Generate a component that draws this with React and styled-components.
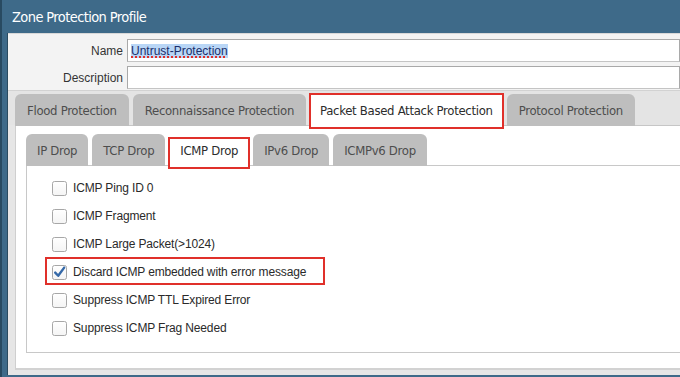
import React from 'react';
import styled, { createGlobalStyle } from 'styled-components';

const NARROW = `"DejaVu Sans Condensed", "Roboto Condensed", "Liberation Sans", sans-serif`;
const UI = `"Liberation Sans", Arial, sans-serif`;

const GlobalStyle = createGlobalStyle`
  html, body {
    margin: 0;
    padding: 0;
  }
  body {
    background: #3e6a89;
    overflow: hidden;
  }
`;

const Dialog = styled.div`
  width: 680px;
  height: 377px;
  box-sizing: border-box;
  display: flex;
  flex-direction: column;
  background: #3e6a89;
  border-left: 2px solid #284a61;
`;

const TitleBar = styled.div`
  height: 33px;
  flex-shrink: 0;
  display: flex;
  align-items: center;
  padding-left: 10px;
  color: #ffffff;
  font-family: ${NARROW};
  font-size: 14.5px;
  letter-spacing: -0.6px;
`;

const Body = styled.div`
  flex: 1;
  min-height: 0;
  margin: 0 0 2px 5px;
  border-left: 1px solid #2a4b60;
  background: #e6e6e6;
  display: flex;
  flex-direction: column;
  padding-bottom: 5px;
`;

const Form = styled.div`
  background: #f3f3f3;
  border-top: 1px solid #d8d8d8;
  padding: 5px 0 1px 0;
  display: flex;
  flex-direction: column;
  gap: 4px;
`;

const FieldRow = styled.div`
  display: grid;
  grid-template-columns: 115px 1fr;
  column-gap: 4px;
  align-items: center;
`;

const Label = styled.label`
  text-align: right;
  font-family: ${UI};
  font-size: 12px;
  color: #333;
`;

const Input = styled.div`
  height: 21px;
  background: #fff;
  border: 1px solid #a9a9a9;
  border-bottom-color: #c4c4c4;
  display: flex;
  align-items: center;
  padding-left: 3px;
  font-family: ${UI};
  font-size: 12px;
  color: #1b2f6b;
`;

const Selected = styled.span`
  background: #b9d6f6;
  text-decoration: underline dotted #e0302a;
  text-decoration-thickness: 2px;
  text-underline-offset: 2px;
`;

const TabStrip = styled.div`
  display: flex;
  gap: 4px;
  padding: ${(p) => (p.inner ? '0' : '3px 0 0 7px')};
  background: ${(p) => (p.inner ? 'transparent' : '#e4e4e4')};
  border-top: ${(p) => (p.inner ? 'none' : '1px solid #d2d2d2')};
  position: relative;
  z-index: 1;
`;

const Tab = styled.div`
  position: relative;
  height: 32px;
  box-sizing: border-box;
  display: flex;
  align-items: center;
  padding: 0 ${(p) => (p.inner ? 11 : p.active ? 10 : 12)}px;
  border-radius: 6px 6px 0 0;
  background: ${(p) => (p.active ? '#ffffff' : '#bebebe')};
  color: ${(p) => (p.active ? '#2c2c2c' : '#4d4d4d')};
  font-family: ${NARROW};
  font-size: 13px;
  letter-spacing: -0.3px;
  white-space: nowrap;
  margin-bottom: -1px;

  ${(p) =>
    p.active &&
    `
    border-radius: 0;
    &::after {
      content: '';
      position: absolute;
      left: -1px;
      right: -1px;
      top: ${p.inner ? 3 : -1}px;
      bottom: -3px;
      border: 2px solid #e0302a;
      pointer-events: none;
    }
  `}
`;

const Panel = styled.div`
  flex: 1;
  margin-left: 7px;
  background: #ffffff;
  border-top: 1px solid #c6c6c6;
  border-left: 1px solid #cfcfcf;
  border-bottom: 2px solid #d2d2d2;
  padding: 8px 0 15px 10px;
  display: flex;
  flex-direction: column;
`;

const OptionBox = styled.div`
  flex: 1;
  border: 1px solid #c8c8c8;
  border-right: none;
  padding: 8px 0 8px 25px;
  display: flex;
  flex-direction: column;
  align-items: flex-start;
`;

const OptionRow = styled.div`
  position: relative;
  height: 28px;
  display: flex;
  align-items: center;
  gap: 6px;
  font-family: ${UI};
  font-size: 12px;
  letter-spacing: -0.15px;
  color: #2a2a2a;

  ${(p) =>
    p.marked &&
    `
    &::after {
      content: '';
      position: absolute;
      left: -7px;
      right: -19px;
      top: -1px;
      bottom: 1px;
      border: 2px solid #e0302a;
      pointer-events: none;
    }
  `}
`;

const Check = ({ checked }) => (
  <svg width="15" height="15" viewBox="0 0 15 15">
    <defs>
      <linearGradient id="cbg" x1="0" y1="0" x2="0" y2="1">
        <stop offset="0" stopColor="#ffffff" />
        <stop offset="1" stopColor={checked ? '#dfe6ee' : '#f4f4f4'} />
      </linearGradient>
    </defs>
    <rect x="0.5" y="0.5" width="14" height="14" rx="2" fill="url(#cbg)" stroke="#a7a7a7" />
    {checked && (
      <path d="M3.2 7.6 L6.2 10.8 L12.2 2.6" fill="none" stroke="#3569a8" strokeWidth="2.4" strokeLinecap="round" strokeLinejoin="round" />
    )}
  </svg>
);

const outerTabs = ['Flood Protection', 'Reconnaissance Protection', 'Packet Based Attack Protection', 'Protocol Protection'];
const innerTabs = ['IP Drop', 'TCP Drop', 'ICMP Drop', 'IPv6 Drop', 'ICMPv6 Drop'];

const options = [
  { label: 'ICMP Ping ID 0' },
  { label: 'ICMP Fragment' },
  { label: 'ICMP Large Packet(>1024)' },
  { label: 'Discard ICMP embedded with error message', checked: true, marked: true },
  { label: 'Suppress ICMP TTL Expired Error' },
  { label: 'Suppress ICMP Frag Needed' },
];

const App = () => (
  <>
    <GlobalStyle />
    <Dialog>
      <TitleBar>Zone Protection Profile</TitleBar>
      <Body>
        <Form>
          <FieldRow>
            <Label>Name</Label>
            <Input>
              <Selected>Untrust-Protection</Selected>
            </Input>
          </FieldRow>
          <FieldRow>
            <Label>Description</Label>
            <Input />
          </FieldRow>
        </Form>

        <TabStrip>
          {outerTabs.map((t, i) => (
            <Tab key={t} active={i === 2}>{t}</Tab>
          ))}
        </TabStrip>

        <Panel>
          <TabStrip inner>
            {innerTabs.map((t, i) => (
              <Tab key={t} inner active={i === 2}>{t}</Tab>
            ))}
          </TabStrip>
          <OptionBox>
            {options.map((o) => (
              <OptionRow key={o.label} marked={o.marked}>
                <Check checked={o.checked} />
                {o.label}
              </OptionRow>
            ))}
          </OptionBox>
        </Panel>
      </Body>
    </Dialog>
  </>
);

export default App;
